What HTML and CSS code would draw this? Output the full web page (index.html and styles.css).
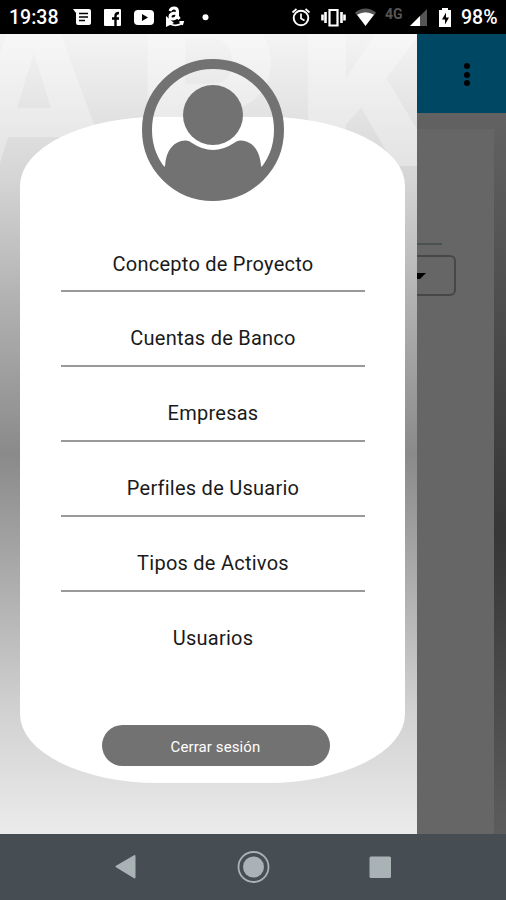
FILE: index.html
```
<!DOCTYPE html>
<html lang="es">
<head>
<meta charset="utf-8">
<title>Menú</title>
<link rel="stylesheet" href="styles.css">
</head>
<body>

<div class="status-bar">
  <span class="clock">19:38</span>
  <svg class="status-icons" width="140" height="34" viewBox="0 0 140 34">
    <!-- messages -->
    <path fill="#fff" d="M0 9h16q2 0 2 2v12q0 2-2 2H5q-2 0-2-2V13z"/>
    <path stroke="#000" stroke-width="1.6" d="M6 13.5h9M6 17h9M6 20.5h6"/>
    <!-- facebook -->
    <rect x="31" y="9" width="17" height="17" rx="1" fill="#fff"/>
    <path fill="none" stroke="#000" stroke-width="2.4" d="M42.500 26v-10q0-3 3.500-3M39 18.500h7"/>
    <!-- youtube -->
    <rect x="61" y="10" width="20" height="15" rx="4" fill="#fff"/>
    <path fill="#000" d="M69 14l6 3.500-6 3.500z"/>
    <!-- amazon -->
    <path fill="none" stroke="#fff" stroke-width="3" d="M97 11q1-3 4-3 3.500 0 3.500 3.500v5l2 2.500M104 13q-7 0-7 3.500 0 2.500 2.500 2.500 4.500 0 4.500-5"/>
    <path fill="#fff" d="M93 16l8 7-8 4z"/>
    <path fill="none" stroke="#fff" stroke-width="1.800" d="M97 24q7 3 12.500-1M106.500 22h3.500l-1 3"/>
    <circle cx="132.500" cy="17.300" r="3" fill="#fff"/>
  </svg>
  <svg class="system-icons" width="166" height="34" viewBox="0 0 166 34">
    <!-- alarm -->
    <circle cx="10" cy="18" r="7.300" fill="none" stroke="#fff" stroke-width="1.900"/>
    <path fill="none" stroke="#fff" stroke-width="1.700" d="M1.500 12.500l4-3.500M18.500 12.500l-4-3.500M10 13.500v5l3.500 2"/>
    <!-- vibrate -->
    <path fill="none" stroke="#fff" stroke-width="2.200" d="M38.500 10h8v15.500h-8z"/>
    <path stroke="#fff" stroke-width="2.600" d="M34.500 12v11M50.500 12v11M31.500 14.500v6M53.500 14.500v6"/>
    <!-- wifi -->
    <path fill="#555" d="M64 12.500q10.500-8 21 0l-2 3q-8.500-6-17 0z"/>
    <path fill="#fff" d="M66 14.800q8.500-5 17 0L74.500 26z"/>
    <text class="network" x="94" y="19">4G</text>
    <path fill="#555" d="M136 9v17h-17z"/>
    <path fill="#fff" d="M129 16v10h-10z"/>
    <!-- battery -->
    <path fill="#fff" d="M151 8h6v2h3v17h-12V10h3z"/>
    <path fill="#000" d="M155 12.500l-4 7h3v5l4-7h-3z"/>
  </svg>
  <span class="battery">98%</span>
</div>

<div class="screen">
  <div class="drawer">
    <div class="watermark"><span>A</span>PK</div>
    <div class="card">
      <svg class="avatar" width="142" height="142" viewBox="0 0 142 142">
        <circle cx="71" cy="71" r="66" fill="none" stroke="#727272" stroke-width="10"/>
        <circle cx="71" cy="56" r="30" fill="#727272"/>
        <path fill="#727272" d="M23 107C24 91 32 82 43 81.500Q47 81 50 84Q71 98 92 84Q95 81 99 81.500C110 82 118 91 119 107L122 110C112 134 92 137 71 137C50 137 30 134 20 110z"/>
      </svg>
      <ul class="menu">
        <li>Concepto de Proyecto</li>
        <li>Cuentas de Banco</li>
        <li>Empresas</li>
        <li>Perfiles de Usuario</li>
        <li>Tipos de Activos</li>
        <li>Usuarios</li>
      </ul>
      <button type="button" class="logout">Cerrar sesión</button>
    </div>
  </div>

  <!-- page left behind the open drawer -->
  <div class="page">
    <div class="toolbar"><i></i><i></i><i></i></div>
    <div class="content">
      <div class="panel">
        <div class="field-line"></div>
        <div class="select"><span class="arrow"></span></div>
      </div>
    </div>
  </div>
</div>

<div class="nav-bar">
  <svg width="506" height="66" viewBox="0 0 506 66">
    <path fill="#a9b2b4" stroke="#a9b2b4" stroke-width="2" stroke-linejoin="round" d="M116.500 32.500L134.500 22v21.500z"/>
    <circle cx="253.500" cy="33" r="15" fill="none" stroke="#a9b2b4" stroke-width="1.800"/>
    <circle cx="253.500" cy="33" r="10.500" fill="#a9b2b4"/>
    <rect x="369.500" y="22.500" width="21.500" height="21.500" rx="1.500" fill="#a9b2b4"/>
  </svg>
</div>

</body>
</html>
```

FILE: styles.css
```
body {
  margin: 0;
  width: 506px;
  height: 900px;
  overflow: hidden;
  font-family: Roboto, "Liberation Sans", sans-serif;
}

.status-bar {
  display: flex;
  align-items: center;
  box-sizing: border-box;
  height: 34px;
  padding: 0 8px 0 9px;
  background: #000;
  color: #fff;
  font-size: 19.5px;
  font-weight: 500;
  line-height: 22px;
}
.clock {
  width: 64px;
  padding-top: 2px;
}
.status-icons {
  flex: none;
  margin-right: 78px;
}
.system-icons {
  flex: none;
  margin-right: 4px;
}
.battery {
  padding-top: 2px;
}
.network {
  fill: #555;
  font-size: 14px;
  font-weight: 700;
}

.screen {
  display: flex;
  height: 800px;
}

.drawer {
  position: relative;
  box-sizing: border-box;
  width: 417px;
  padding: 83px 12px 51px 20px;
  overflow: hidden;
  background: linear-gradient(#f4f4f4 0, #d5d5d5 18%, #b0b0b0 34%, #8a8a8a 52.5%, #b0b0b0 70%, #d0d0d0 84%, #ebebeb 100%);
}
.watermark {
  position: absolute;
  top: -53px;
  left: -41px;
  color: rgba(255, 255, 255, 0.3);
  font-size: 220px;
  font-weight: 900;
  line-height: 220px;
  letter-spacing: 17px;
}
.watermark span {
  letter-spacing: 27px;
}
.card {
  position: relative;
  display: flex;
  flex-direction: column;
  align-items: center;
  height: 666px;
  border-radius: 138px / 69px;
  background: #fff;
}
.avatar {
  flex: none;
  margin-top: -58px;
}

.menu {
  width: 304px;
  margin: 16.6px 0 0;
  padding: 0;
  list-style: none;
}
.menu li {
  box-sizing: border-box;
  height: 74.8px;
  padding-top: 33px;
  border-bottom: 2px solid #999;
  color: #1a1a1a;
  font-size: 20px;
  line-height: 26px;
  letter-spacing: 0.25px;
  text-indent: 1px;
  text-align: center;
}
.menu li:last-child {
  border-bottom: 0;
}

.logout {
  width: 228px;
  height: 41px;
  margin: 58.4px 0 0 6px;
  padding: 3px 0 0;
  border: 0;
  border-radius: 21px;
  background: #727272;
  color: #fff;
  font-family: inherit;
  font-size: 15px;
  letter-spacing: 0.1px;
}

.page {
  display: flex;
  flex-direction: column;
  width: 89px;
}
.toolbar {
  display: flex;
  flex-direction: column;
  align-items: center;
  gap: 2.5px;
  height: 50px;
  padding: 29px 0 0 11px;
  background: #004764;
}
.toolbar i {
  width: 6px;
  height: 6px;
  border-radius: 50%;
  background: #000;
}
.content {
  flex: 1;
  padding: 16px 12px 0 0;
  background: linear-gradient(#626262, #363636 58%, #5c5c5c);
}
.panel {
  height: 100%;
  background: #666;
}
.field-line {
  width: 25px;
  padding-top: 114px;
  border-bottom: 2px solid #4a5252;
}
.select {
  box-sizing: border-box;
  width: 39px;
  height: 41px;
  margin-top: 10px;
  padding-top: 16px;
  border: 2px solid #474747;
  border-left: 0;
  border-radius: 0 6px 6px 0;
}
.arrow {
  display: block;
  width: 0;
  border-top: 6px solid #000;
  border-right: 6px solid transparent;
  border-left: 3px solid #000;
}

.nav-bar {
  height: 66px;
  background: #464e54;
}
.nav-bar svg {
  display: block;
}
```
